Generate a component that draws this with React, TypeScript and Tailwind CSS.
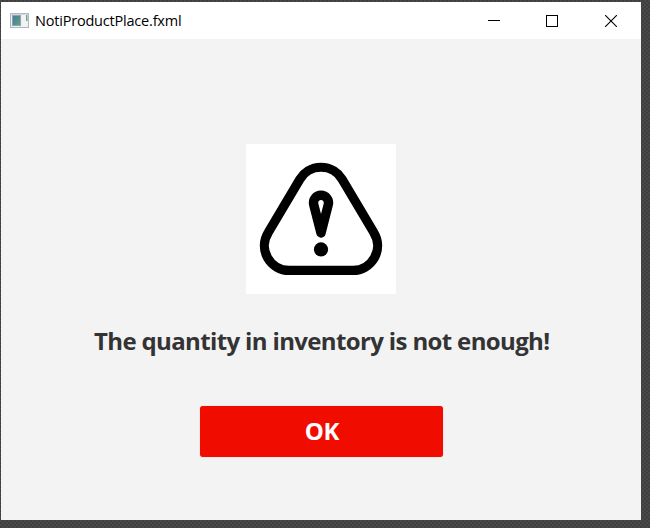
function AppIcon() {
  return (
    <svg className="ml-[9px] block" width="20" height="17" viewBox="0 0 20 17">
      <rect x="0.5" y="1.5" width="18" height="14" fill="#eef0f3" stroke="#b0b5be" />
      <rect x="0" y="1" width="19" height="1.5" fill="#b5bac5" />
      <rect x="2" y="3" width="9" height="11" fill="#8ba3b4" />
      <rect x="3" y="4" width="7" height="9" fill="url(#pane)" />
      <rect x="12" y="3" width="4" height="11" fill="#f3f3f3" />
      <rect x="16" y="3" width="1.5" height="6" fill="#65a895" />
      <defs>
        <linearGradient id="pane" x1="0" y1="0" x2="1" y2="1">
          <stop offset="0" stopColor="#4678a0" />
          <stop offset="1" stopColor="#5fa678" />
        </linearGradient>
      </defs>
    </svg>
  );
}

function TitleBar() {
  return (
    <header className="flex h-[37px] items-center bg-white">
      <AppIcon />
      <h1 className="ml-[5px] flex-1 whitespace-nowrap font-['Open_Sans','Noto_Sans',sans-serif] text-[14.5px] leading-5 tracking-[-0.2px] text-black">
        NotiProductPlace.fxml
      </h1>
      <div className="mr-[24px] flex items-center gap-[46px]">
        <svg width="12" height="12" shapeRendering="crispEdges">
          <path d="M0 5.5H12" stroke="#000" />
        </svg>
        <svg width="12" height="12" shapeRendering="crispEdges">
          <rect x="0.5" y="0.5" width="11" height="11" fill="none" stroke="#000" />
        </svg>
        <svg className="ml-px" width="12" height="12">
          <path d="M0 0L12 12M12 0L0 12" stroke="#000" strokeWidth="1.1" />
        </svg>
      </div>
    </header>
  );
}

function WarningImage() {
  return (
    <svg className="mt-[105px] ml-[245px] block bg-white" width="150" height="150" viewBox="0 0 150 150">
      <path
        d="M22.3 88.4L53.8 35.3A24.7 24.7 0 0 1 96.2 35.3L127.7 88.4A24.7 24.7 0 0 1 106.4 126.4H43.6A24.7 24.7 0 0 1 22.3 88.4Z"
        fill="none"
        stroke="#000"
        strokeWidth="9.2"
      />
      <path
        d="M75 89L67.7 60.5A7.5 7.5 0 1 1 82.3 60.5Z"
        fill="none"
        stroke="#000"
        strokeWidth="9.4"
        strokeLinejoin="round"
      />
      <circle cx="75" cy="105.4" r="7.1" fill="#000" />
    </svg>
  );
}

export default function App() {
  return (
    <div className="h-[528px] w-[650px] overflow-hidden bg-[#444444] bg-[repeating-conic-gradient(#3f3f3f_0_25%,#494949_0_50%)] bg-[length:4px_4px] pt-[2px] pl-px">
      <main className="h-[518px] w-[640px] bg-[#f3f3f3]">
        <TitleBar />
        <WarningImage />
        <p className="mt-[30px] ml-[93px] whitespace-nowrap font-['Open_Sans','Noto_Sans',sans-serif] text-[24px] leading-[34px] font-bold tracking-[-0.64px] text-[#333333]">
          The quantity in inventory is not enough!
        </p>
        <button className="mt-[48px] ml-[199px] flex h-[51px] w-[243px] items-center justify-center rounded-[3px] bg-[#f10c00] pb-[2px] pl-px font-['Open_Sans','Noto_Sans',sans-serif] text-[24px] font-bold tracking-[-0.3px] text-white shadow-[0_0_1px_#d88]">
          OK
        </button>
      </main>
    </div>
  );
}
